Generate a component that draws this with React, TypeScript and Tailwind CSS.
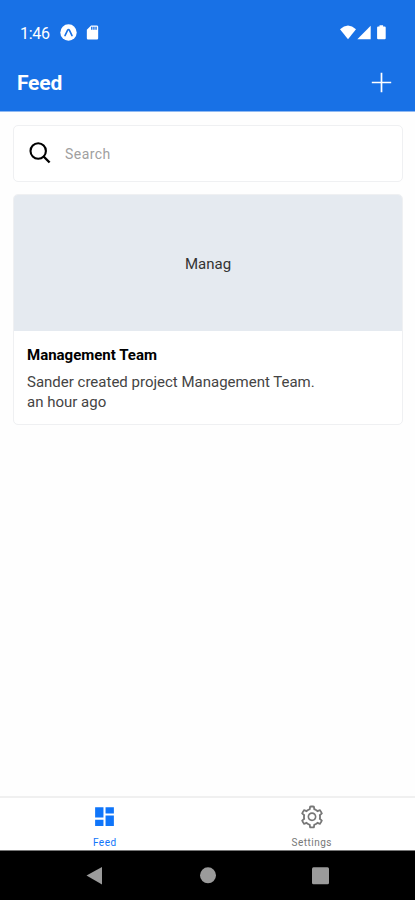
import { AiOutlineSetting } from "react-icons/ai";
import { MdDashboard, MdSdCard } from "react-icons/md";

const posts = [
  {
    cover: "Manag",
    title: "Management Team",
    body: "Sander created project Management Team.",
    time: "an hour ago",
  },
];

function StatusBar() {
  return (
    <div className="flex h-[54px] items-end justify-between pr-[28px] pb-[13px] pl-[20px]">
      <div className="flex h-[17px] items-center">
        <span className="w-[40px] pt-[2px] text-[16px] leading-[17px] tracking-[-0.3px]">1:46</span>
        <svg className="size-[17px]" viewBox="0 0 17 17">
          <circle cx="8.5" cy="8.5" r="8.2" fill="#fff" />
          <path
            d="M5 11.6 7.6 6.2q.9-1.5 1.8 0L12 11.6"
            fill="none"
            stroke="#1871e6"
            strokeWidth="1.6"
            strokeLinecap="round"
          />
        </svg>
        <MdSdCard className="ml-[7px] size-[17px]" />
      </div>
      <div className="flex h-[17px] items-center">
        <svg className="h-[15px] w-[47px]" viewBox="0 0 47 15" fill="#fff">
          <path d="M0 4.2Q8 -3.2 16 4.2L8 14.2Z" />
          <path d="M30.7.8v13.4H17.3Z" />
          <path d="M39.5 1.6V.3h3.6v1.3h1.6q1 0 1 1v10.6q0 1-1 1h-6.6q-1 0-1-1V2.6q0-1 1-1Z" />
        </svg>
      </div>
    </div>
  );
}

function Header() {
  return (
    <header className="h-[112px] border-b border-[#8fb9f2] bg-[#1871e6] text-white">
      <StatusBar />
      <div className="flex h-[57px] items-center justify-between pr-[23px] pl-[17px]">
        <h1 className="pt-[2px] text-[21px] font-bold tracking-[-0.2px]">Feed</h1>
        <svg className="size-[21px]" viewBox="0 0 21 21">
          <path d="M10.5.8v19.4M.8 10.5h19.4" stroke="#fff" strokeWidth="1.7" />
        </svg>
      </div>
    </header>
  );
}

function TabBar() {
  return (
    <nav className="grid h-[54px] grid-cols-2 border-t-2 border-[#f0f0f0] bg-white">
      <div className="flex flex-col items-center pl-[2px] text-[#0f75fa]">
        <MdDashboard className="mt-[6px] size-[25px]" />
        <span className="mt-[7px] text-[10px] leading-[14px] tracking-[0.5px]">Feed</span>
      </div>
      <div className="flex flex-col items-center pl-[1px] text-[#777]">
        <AiOutlineSetting className="mt-[6px] size-[26px]" />
        <span className="mt-[6px] text-[10px] leading-[14px] tracking-[0.5px]">Settings</span>
      </div>
    </nav>
  );
}

function SystemBar() {
  return (
    <div className="h-[50px] border-t border-[#777] bg-black">
      <svg className="h-[49px] w-full" viewBox="0 0 415 49" fill="#9b9b9b">
        <path d="M86.5 24.5 102 16v17.5Z" />
        <circle cx="208" cy="24.3" r="8" />
        <rect x="312" y="16.3" width="17" height="17" rx="1.5" />
      </svg>
    </div>
  );
}

export default function App() {
  return (
    <div className="flex h-[900px] w-[415px] flex-col overflow-hidden bg-[#fefefe] font-['Roboto',sans-serif]">
      <Header />
      <main className="flex-1 pt-[13px] pr-[12px] pl-[13px]">
        <div className="flex h-[57px] items-center rounded-[5px] border border-[#eff0f2] bg-white pl-[15px]">
          <svg className="mb-[2px] size-[22px]" viewBox="0 0 22 22" fill="none" stroke="#000" strokeWidth="2.1">
            <circle cx="9.2" cy="9" r="7.7" />
            <path d="m14.6 14.5 6 6" strokeWidth="2.4" />
          </svg>
          <span className="ml-[14px] pt-[2px] text-[14px] tracking-[0.45px] text-[#a0a0a0]">Search</span>
        </div>
        {posts.map((post) => (
          <article
            key={post.title}
            className="mt-[12px] h-[231px] overflow-hidden rounded-[5px] border border-[#eff0f2] bg-white"
          >
            <div className="flex h-[136px] items-center justify-center bg-[#e5eaf0] pt-[3px] text-[15px] text-[#333]">
              {post.cover}
            </div>
            <div className="px-[13px] pt-[14px] text-[15px] leading-[20px] text-[#444]">
              <h2 className="mb-[7px] text-[15px] font-bold text-black">{post.title}</h2>
              <p>{post.body}</p>
              <p>{post.time}</p>
            </div>
          </article>
        ))}
      </main>
      <TabBar />
      <SystemBar />
    </div>
  );
}
